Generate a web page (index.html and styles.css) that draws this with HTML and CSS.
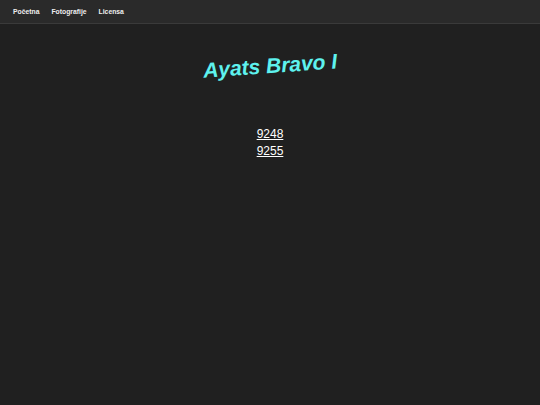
FILE: index.html
```html
<!DOCTYPE html>
<html lang="sr">
<head>
    <meta charset="UTF-8">
    <meta name="viewport" content="width=device-width, initial-scale=1.0">
    <title>Ayats Bravo I</title>
    <link rel="stylesheet" href="styles.css">
</head>
<body>

    <!-- Navigacija -->
    <nav class="topbar">
        <a href="#">Početna</a>
        <a href="#">Fotografije</a>
        <a href="#">Licensa</a>
    </nav>

    <!-- Sadržaj -->
    <div class="content">
        <h1 class="title">Ayats Bravo I</h1>
        <ul class="photos">
            <li><a href="#">9248</a></li>
            <li><a href="#">9255</a></li>
        </ul>
    </div>

</body>
</html>
```

FILE: styles.css
```css
/* Opšti stilovi */
body {
    font-family: "Liberation Sans", Arial, sans-serif;
    margin: 0;
    background-color: #202020;
    color: #fff;
}

/* Gornja traka */
.topbar {
    display: flex;
    gap: 12px;
    height: 23px;
    align-items: center;
    padding: 0 13px;
    background-color: #2a2a2a;
    border-bottom: 1px solid #3a3a3a;
}

.topbar a {
    color: #eee;
    font-size: 6.8px;
    font-weight: bold;
    text-decoration: none;
}

/* Naslov */
.content {
    text-align: center;
}

.title {
    display: inline-block;
    margin: 30px 0 0;
    font-size: 21px;
    font-style: italic;
    font-weight: bold;
    color: #5ef2ee;
    transform: rotate(-4deg);
}

/* Lista fotografija */
.photos {
    list-style: none;
    margin: 48px 0 0;
    padding: 0;
    font-size: 12px;
    line-height: 17px;
}

.photos a {
    color: #fff;
}
```
